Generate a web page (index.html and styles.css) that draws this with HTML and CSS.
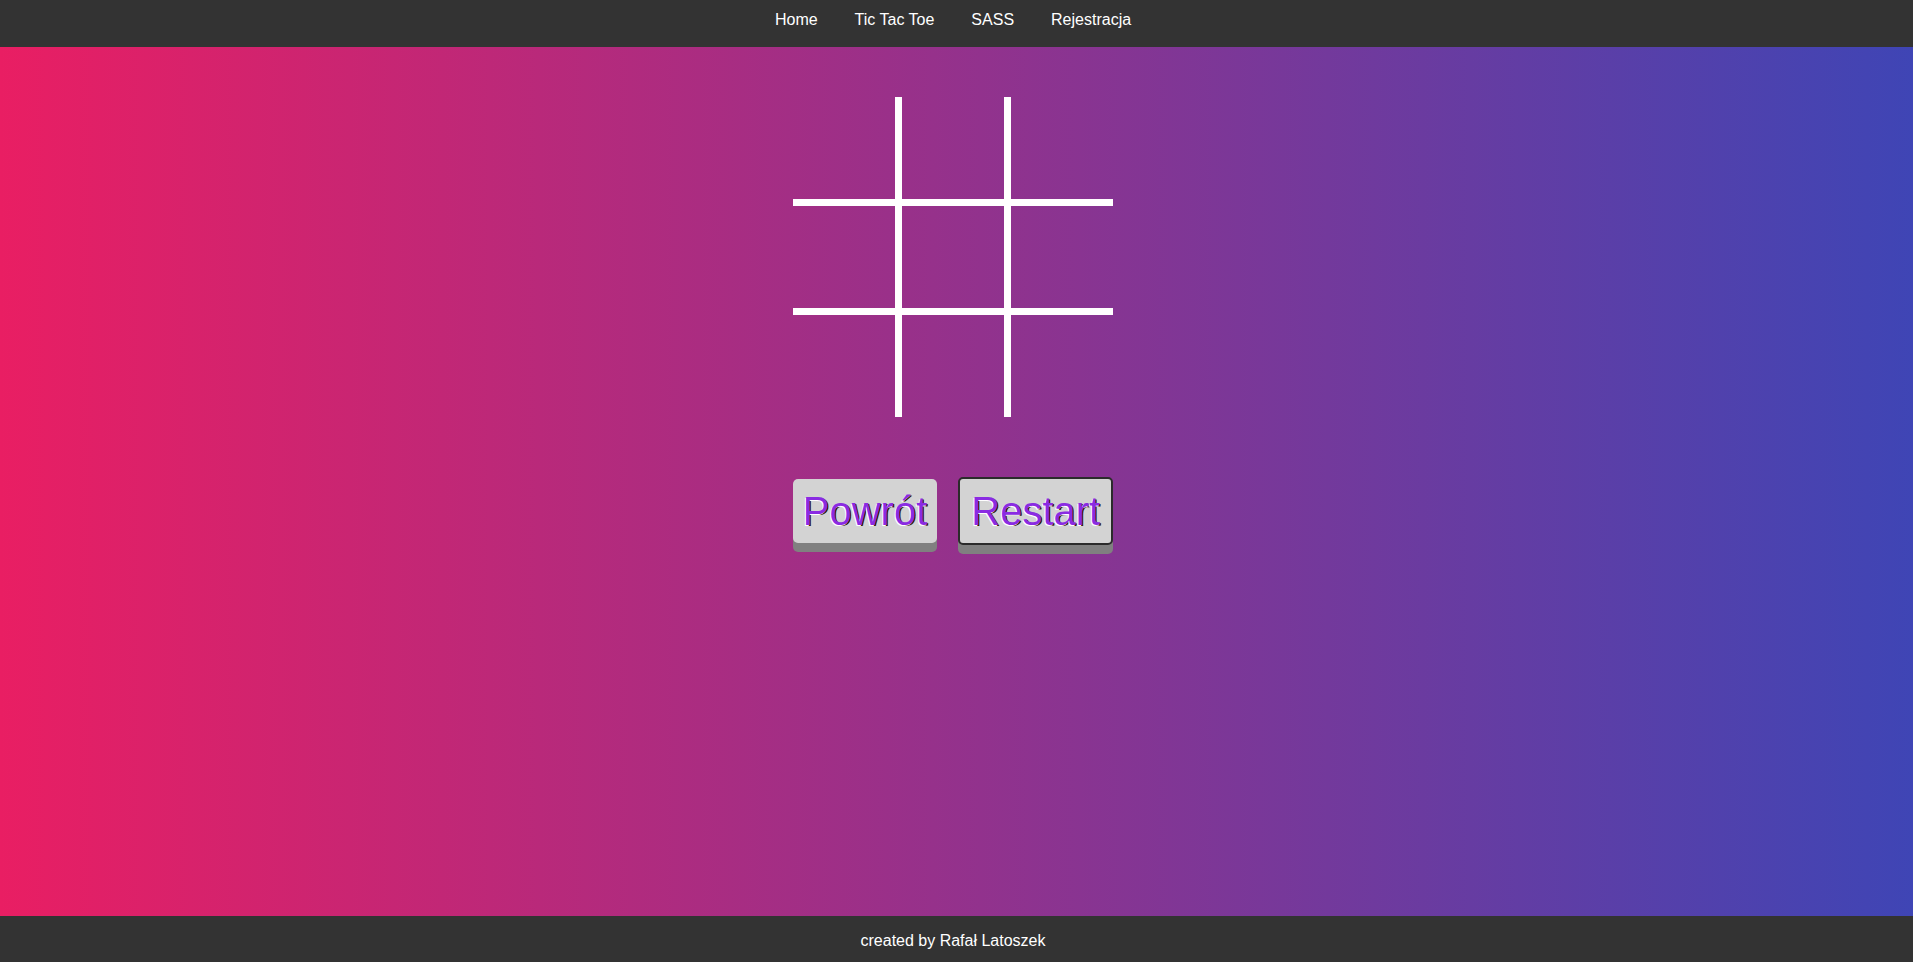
FILE: index.html
```html
<!DOCTYPE html>
<html lang="pl">
<head>
<meta charset="utf-8">
<title>Tic Tac Toe</title>
<link rel="stylesheet" href="styles.css">
</head>
<body>
<div class="page">
  <nav class="nav">
    <a href="#" class="nav-link">Home</a>
    <a href="#" class="nav-link">Tic Tac Toe</a>
    <a href="#" class="nav-link">SASS</a>
    <a href="#" class="nav-link">Rejestracja</a>
  </nav>
  <main class="main">
    <div class="board">
      <div class="cell c-r c-b"></div>
      <div class="cell c-r c-b"></div>
      <div class="cell c-b"></div>
      <div class="cell c-r c-b"></div>
      <div class="cell c-r c-b"></div>
      <div class="cell c-b"></div>
      <div class="cell c-r"></div>
      <div class="cell c-r"></div>
      <div class="cell"></div>
    </div>
    <div class="actions">
      <button class="btn">Powrót</button>
      <button class="btn btn-active">Restart</button>
    </div>
  </main>
  <footer class="footer">created by Rafał Latoszek</footer>
</div>
</body>
</html>
```
FILE: styles.css
```css
html, body {
  margin: 0;
  padding: 0;
  height: 100%;
}
body {
  font-family: "Liberation Sans", Arial, sans-serif;
  background: linear-gradient(to right, #e91e63, #3f45b5);
}
.page {
  display: flex;
  flex-direction: column;
  height: 962px;
}
.nav {
  height: 47px;
  background: #333333;
  display: flex;
  justify-content: center;
  align-items: flex-start;
  gap: 37px;
  padding-right: 7px;
  box-sizing: border-box;
}
.nav-link {
  color: #ffffff;
  text-decoration: none;
  font-size: 16px;
  line-height: 18px;
  padding-top: 11px;
}
.main {
  flex: 1;
  display: flex;
  flex-direction: column;
  align-items: center;
  padding-top: 50px;
  padding-right: 7px;
}
.board {
  display: grid;
  grid-template-columns: 109px 109px 102px;
  grid-template-rows: 109px 109px 102px;
  width: 320px;
  height: 320px;
}
.cell {
  box-sizing: border-box;
}
.c-r { border-right: 7px solid #ffffff; }
.c-b { border-bottom: 7px solid #ffffff; }
.actions {
  display: flex;
  align-items: flex-start;
  gap: 21px;
  margin-top: 60px;
}
.btn {
  font-family: "Liberation Sans", Arial, sans-serif;
  font-size: 40px;
  line-height: 46px;
  color: #8a2be2;
  background: #d3d3d3;
  border: 0;
  border-radius: 5px;
  padding: 9px 10px;
  height: 64px;
  margin-top: 2px;
  box-shadow: 0 9px 0 #808080;
  text-shadow: -1px 1px 0 #ffffff, 1px 1px 0 #2a1200;
  cursor: pointer;
}
.btn-active {
  border: 2px solid #2b2b2b;
  height: 68px;
  margin-top: 0;
  padding: 9px 11px;
}
.footer {
  height: 46px;
  box-sizing: border-box;
  padding-top: 3px;
  background: #333333;
  color: #ffffff;
  font-size: 16px;
  display: flex;
  align-items: center;
  justify-content: center;
  padding-right: 7px;
}
```
